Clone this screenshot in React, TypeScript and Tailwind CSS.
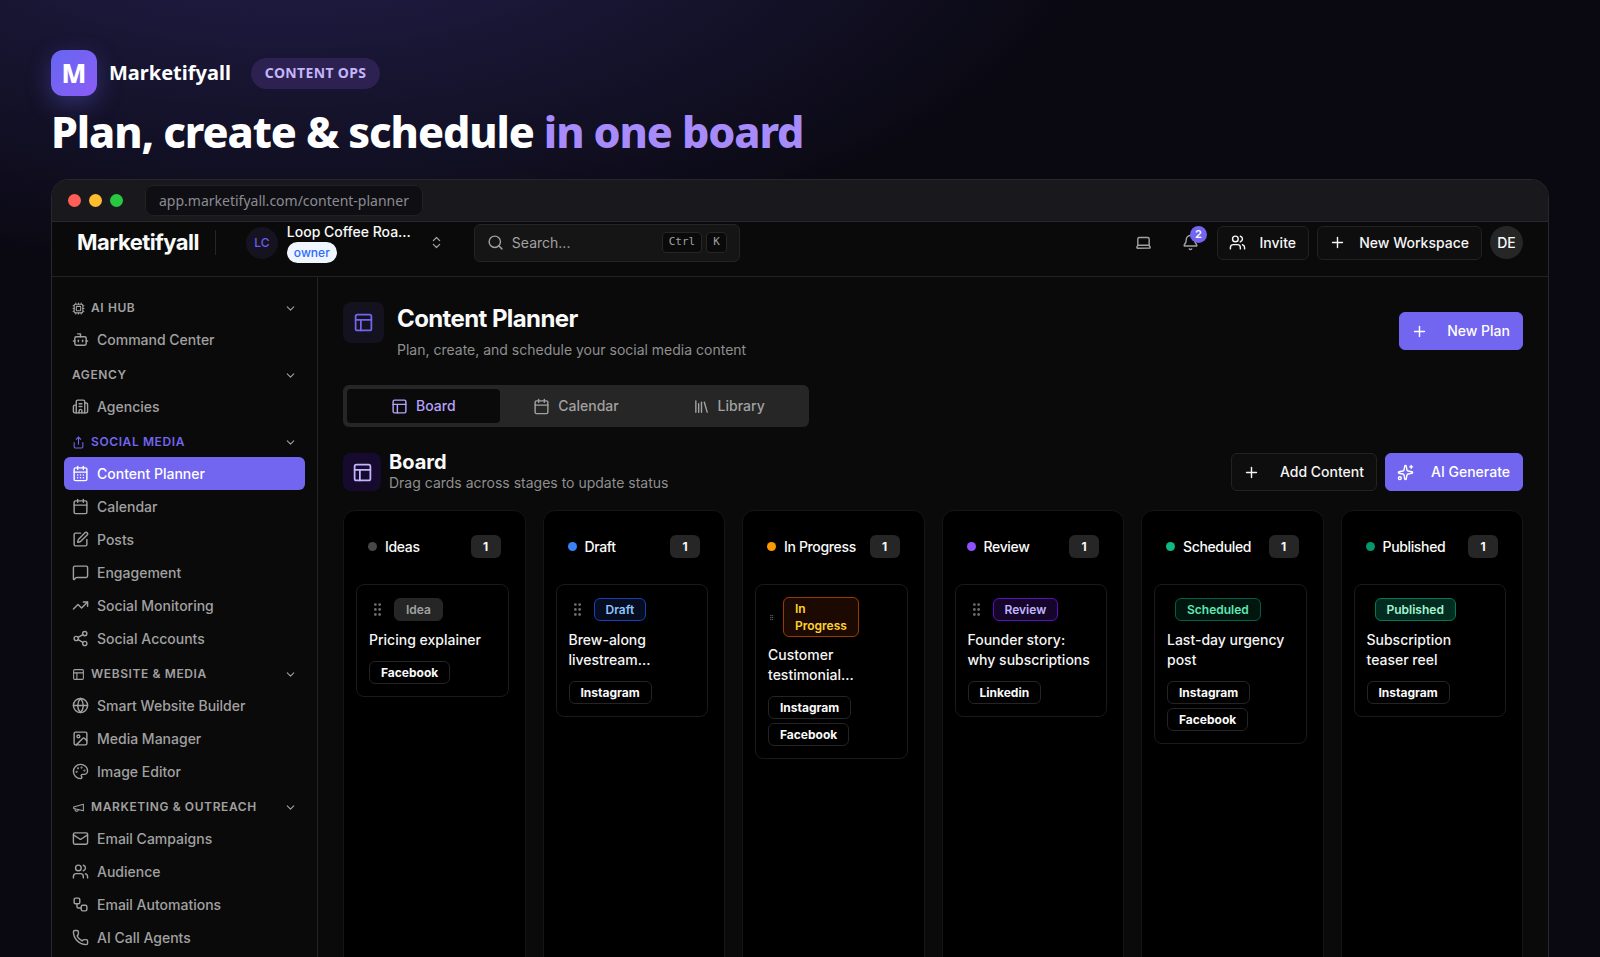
import type { ReactNode } from "react";
import {
  Bell,
  Bot,
  Building2,
  Calendar,
  CalendarDays,
  ChevronDown,
  ChevronsUpDown,
  Cpu,
  Globe,
  GripVertical,
  Image,
  Laptop,
  Library,
  type LucideIcon,
  Mail,
  MessageSquare,
  Palette,
  PanelsTopLeft,
  Phone,
  Plus,
  Search,
  Share,
  Share2,
  Sparkles,
  SquarePen,
  TrendingUp,
  Users,
  Workflow,
  createLucideIcon,
} from "lucide-react";
import clsx from "clsx";

const Megaphone = createLucideIcon("megaphone-classic", [
  ["path", { d: "m3 11 18-5v12L3 14v-3z", key: "horn" }],
  ["path", { d: "M11.6 16.8a3 3 0 1 1-5.8-1.6", key: "grip" }],
]);

interface NavItem {
  label: string;
  icon: LucideIcon;
  active?: boolean;
}

interface NavGroup {
  title: string;
  icon?: LucideIcon;
  active?: boolean;
  items: NavItem[];
}

const groups: NavGroup[] = [
  { title: "AI HUB", icon: Cpu, items: [{ label: "Command Center", icon: Bot }] },
  { title: "AGENCY", items: [{ label: "Agencies", icon: Building2 }] },
  {
    title: "SOCIAL MEDIA",
    icon: Share,
    active: true,
    items: [
      { label: "Content Planner", icon: CalendarDays, active: true },
      { label: "Calendar", icon: Calendar },
      { label: "Posts", icon: SquarePen },
      { label: "Engagement", icon: MessageSquare },
      { label: "Social Monitoring", icon: TrendingUp },
      { label: "Social Accounts", icon: Share2 },
    ],
  },
  {
    title: "WEBSITE & MEDIA",
    icon: PanelsTopLeft,
    items: [
      { label: "Smart Website Builder", icon: Globe },
      { label: "Media Manager", icon: Image },
      { label: "Image Editor", icon: Palette },
    ],
  },
  {
    title: "MARKETING & OUTREACH",
    icon: Megaphone,
    items: [
      { label: "Email Campaigns", icon: Mail },
      { label: "Audience", icon: Users },
      { label: "Email Automations", icon: Workflow },
      { label: "AI Call Agents", icon: Phone },
    ],
  },
];

interface Stage {
  name: string;
  dot: string;
  badge: string;
  badgeClass: string;
  grip: "full" | "tiny" | "none";
  title: string[];
  channels: string[];
}

const stages: Stage[] = [
  {
    name: "Ideas",
    dot: "bg-[#474747]",
    badge: "Idea",
    badgeClass: "border-[#262626] bg-[#262626] text-[#a1a1a1]",
    grip: "full",
    title: ["Pricing explainer"],
    channels: ["Facebook"],
  },
  {
    name: "Draft",
    dot: "bg-[#3b82f6]",
    badge: "Draft",
    badgeClass: "border-[#193cb8] bg-[#070d20] text-[#8ec5ff]",
    grip: "full",
    title: ["Brew-along", "livestream…"],
    channels: ["Instagram"],
  },
  {
    name: "In Progress",
    dot: "bg-[#fe9a00]",
    badge: "In Progress",
    badgeClass: "w-[76px] border-[#973c00] bg-[#1c0a02] text-[#ffd230]",
    grip: "tiny",
    title: ["Customer", "testimonial…"],
    channels: ["Instagram", "Facebook"],
  },
  {
    name: "Review",
    dot: "bg-[#8e51ff]",
    badge: "Review",
    badgeClass: "border-[#5d0ec0] bg-[#150629] text-[#c4b4ff]",
    grip: "full",
    title: ["Founder story:", "why subscriptions"],
    channels: ["Linkedin"],
  },
  {
    name: "Scheduled",
    dot: "bg-[#10b981]",
    badge: "Scheduled",
    badgeClass: "border-[#006045] bg-[#01160f] text-[#5ee9b5]",
    grip: "none",
    title: ["Last-day urgency", "post"],
    channels: ["Instagram", "Facebook"],
  },
  {
    name: "Published",
    dot: "bg-[#059669]",
    badge: "Published",
    badgeClass: "border-[#007a55] bg-[#032c21] text-[#a4f4cf]",
    grip: "none",
    title: ["Subscription", "teaser reel"],
    channels: ["Instagram"],
  },
];

interface ButtonProps {
  icon: LucideIcon;
  primary?: boolean;
  className?: string;
  children: ReactNode;
}

const Button = ({ icon: Icon, primary, className, children }: ButtonProps) => (
  <button
    type="button"
    className={clsx(
      "flex items-center justify-between rounded-md border pr-3 pl-[11px] text-sm font-medium",
      primary ? "border-[#7265f0] bg-[#7265f0] text-white" : "border-[#222] bg-[#0e0e0e] text-[#f5f5f5]",
      className
    )}
  >
    <Icon size={17} />
    {children}
  </button>
);

const Hero = () => (
  <div className="px-[51px] pt-[50px]">
    <div className="flex items-center">
      <div className="flex h-[46px] w-[46px] items-center justify-center rounded-xl bg-linear-to-br from-[#6366f1] to-[#8b5cf6] text-[26px] font-extrabold text-white shadow-[0_8px_24px_rgba(99,102,241,0.35)]">
        M
      </div>
      <span className="ml-3 text-xl font-bold text-white">Marketifyall</span>
      <span className="ml-5 flex h-[31px] items-center rounded-full bg-[#2c2150] px-[14px] text-sm font-bold tracking-wide text-[#c4b5fd]">
        CONTENT OPS
      </span>
    </div>
    <h1 className="mt-2 text-[43px] leading-[56px] font-extrabold tracking-tight text-white">
      Plan, create &amp; schedule <span className="text-[#a78bfa]">in one board</span>
    </h1>
  </div>
);

const TitleBar = () => (
  <div className="flex h-[42px] items-center border-b border-[#27272c] bg-[#18181d] pl-4">
    <div className="flex gap-2">
      <span className="h-[13px] w-[13px] rounded-full bg-[#ff5f57]" />
      <span className="h-[13px] w-[13px] rounded-full bg-[#febc2e]" />
      <span className="h-[13px] w-[13px] rounded-full bg-[#28c840]" />
    </div>
    <span className="ml-[22px] flex h-[31px] items-center rounded-lg border border-[#202026] bg-[#0f0f13] px-[13px] text-sm text-[#8b8b94]">
      app.marketifyall.com/content-planner
    </span>
  </div>
);

const Header = () => (
  <header className="flex h-[55px] items-center border-b border-[#222] px-[25px] pb-[13px]">
    <span className="text-[22px] font-bold tracking-tight text-[#fafafa]">Marketifyall</span>
    <span className="ml-4 h-[25px] w-px bg-[#262626]" />
    <button type="button" className="ml-[30px] flex items-center text-left">
      <span className="flex h-8 w-8 items-center justify-center rounded-full bg-[#15131f] text-xs font-medium text-[#6a5cf0]">LC</span>
      <span className="ml-[9px] flex w-[142px] flex-col items-start">
        <span className="text-sm leading-5 font-medium text-[#fafafa]">Loop Coffee Roa…</span>
        <span className="flex h-[21px] items-center rounded-full bg-[#eff6ff] px-[7px] text-xs font-medium text-[#2b6bff]">owner</span>
      </span>
      <ChevronsUpDown size={15} className="text-[#a1a1a1]" />
    </button>
    <label className="ml-[30px] flex h-[38px] w-[266px] items-center rounded-md border border-[#242424] bg-[#151515] px-3 text-[#a1a1a1]">
      <Search size={17} />
      <input
        aria-label="Search"
        placeholder="Search..."
        className="ml-2 min-w-0 flex-1 bg-transparent text-sm outline-none placeholder:text-[#a1a1a1]"
      />
      <kbd className="flex h-[21px] items-center rounded border border-[#262626] bg-[#0a0a0a] px-1.5 font-['DejaVu_Sans_Mono',monospace] text-[11px]">Ctrl</kbd>
      <kbd className="ml-1 flex h-[21px] items-center rounded border border-[#262626] bg-[#0a0a0a] px-1.5 font-['DejaVu_Sans_Mono',monospace] text-[11px]">K</kbd>
    </label>
    <div className="ml-auto flex items-center gap-2">
      <button type="button" aria-label="Theme" className="mr-[22px] text-[#a1a1a1]">
        <Laptop size={17} />
      </button>
      <button type="button" aria-label="Notifications" className="relative mr-[10px] text-[#a1a1a1]">
        <Bell size={17} />
        <span className="absolute -top-2 -right-2 flex h-[17px] w-[17px] items-center justify-center rounded-full bg-[#7265f0] text-[11px] font-semibold text-white">2</span>
      </button>
      <Button icon={Users} className="h-[34px] w-[92px]">Invite</Button>
      <Button icon={Plus} className="h-[34px] w-[165px]">New Workspace</Button>
      <span className="flex h-[33px] w-[33px] items-center justify-center rounded-full bg-[#262626] text-sm font-medium text-[#fafafa]">DE</span>
    </div>
  </header>
);

const Sidebar = () => (
  <nav className="w-[266px] shrink-0 border-r border-[#222] px-3 pt-3">
    {groups.map(({ title, icon: Icon, active, items }) => (
      <div key={title}>
        <button
          type="button"
          className={clsx(
            "flex h-[34px] w-full items-center gap-1.5 pt-1 pr-2 pl-2 text-xs font-semibold tracking-wider",
            active ? "text-[#7265f0]" : "text-[#a1a1a1]"
          )}
        >
          {Icon && <Icon size={13} />}
          {title}
          <ChevronDown size={13} className="ml-auto text-[#a1a1a1]" />
        </button>
        {items.map(({ label, icon: ItemIcon, active: current }) => (
          <a
            key={label}
            href="#"
            className={clsx(
              "flex h-[33px] items-center gap-2 rounded-md pl-2 text-sm font-medium",
              current ? "bg-[#7265f0] text-white" : "text-[#a1a1a1]"
            )}
          >
            <ItemIcon size={17} />
            {label}
          </a>
        ))}
      </div>
    ))}
  </nav>
);

const StageColumn = ({ stage }: { stage: Stage }) => (
  <section className="min-w-0 rounded-xl border border-[#151515] bg-black pr-4 pl-3">
    <div className="flex items-center pt-6 pr-2 pl-3">
      <span className={clsx("h-[9px] w-[9px] rounded-full", stage.dot)} />
      <h3 className="ml-2 text-sm font-medium tracking-tight whitespace-nowrap text-[#fafafa]">{stage.name}</h3>
      <span className="ml-auto flex h-[23px] w-[30px] items-center justify-center rounded-md bg-[#262626] text-xs font-bold text-[#fafafa]">1</span>
    </div>
    <article className="mt-[26px] rounded-lg border border-[#1a1a1a] p-3">
      <div className="flex min-h-[25px] items-center gap-2">
        {stage.grip === "full" && <GripVertical size={17} className="text-[#6b6b6b]" />}
        {stage.grip === "tiny" && <GripVertical size={7} className="text-[#6b6b6b]" />}
        {stage.grip === "none" && <span />}
        <span className={clsx("rounded-md border px-[11px] py-[2px] text-xs leading-[17px] font-semibold", stage.badgeClass)}>{stage.badge}</span>
      </div>
      <h4 className="mt-2 text-sm leading-5 font-medium text-[#f5f5f5]">
        {stage.title.map((line) => (
          <span key={line} className="block whitespace-nowrap">{line}</span>
        ))}
      </h4>
      <div className="mt-[11px] flex flex-wrap gap-1">
        {stage.channels.map((channel) => (
          <span key={channel} className="rounded-md border border-[#242424] px-[11px] py-[2px] text-xs leading-[17px] font-bold text-[#fafafa]">
            {channel}
          </span>
        ))}
      </div>
    </article>
  </section>
);

const Planner = () => (
  <main className="flex min-w-0 flex-1 flex-col px-[25px] pt-[25px]">
    <div className="flex items-start">
      <span className="flex h-[41px] w-[41px] items-center justify-center rounded-lg bg-[#14121f] text-[#7265f0]">
        <PanelsTopLeft size={21} />
      </span>
      <div className="ml-[13px]">
        <h2 className="text-2xl leading-[34px] font-bold tracking-tight text-[#fafafa]">Content Planner</h2>
        <p className="mt-1 text-sm leading-5 text-[#8f8f8f]">Plan, create, and schedule your social media content</p>
      </div>
      <Button icon={Plus} primary className="mt-[10px] ml-auto h-[38px] w-[124px]">New Plan</Button>
    </div>

    <div role="tablist" className="mt-[25px] grid h-[42px] w-[466px] grid-cols-3 rounded-md bg-[#262626] p-1 text-sm font-medium text-[#a1a1a1]">
      <button type="button" role="tab" aria-selected="true" className="flex items-center justify-center gap-2 rounded bg-[#0a0a0a] text-[#b5a2fb]">
        <PanelsTopLeft size={17} />
        Board
      </button>
      <button type="button" role="tab" aria-selected="false" className="flex items-center justify-center gap-2">
        <Calendar size={17} />
        Calendar
      </button>
      <button type="button" role="tab" aria-selected="false" className="flex items-center justify-center gap-2">
        <Library size={17} />
        Library
      </button>
    </div>

    <div className="mt-6 flex items-center">
      <span className="flex h-[38px] w-[38px] items-center justify-center rounded-lg bg-[#160b2e] text-[#c4b4ff]">
        <PanelsTopLeft size={21} />
      </span>
      <div className="ml-2">
        <h2 className="text-xl leading-[22px] font-bold text-[#fafafa]">Board</h2>
        <p className="text-sm leading-5 text-[#8f8f8f]">Drag cards across stages to update status</p>
      </div>
      <div className="ml-auto flex gap-2">
        <Button icon={Plus} className="h-[38px] w-[146px]">Add Content</Button>
        <Button icon={Sparkles} primary className="h-[38px] w-[138px]">AI Generate</Button>
      </div>
    </div>

    {/* columns run past the bottom of the window */}
    <div className="mt-[17px] -mb-5 grid flex-1 grid-cols-6 gap-[17px]">
      {stages.map((stage) => (
        <StageColumn key={stage.name} stage={stage} />
      ))}
    </div>
  </main>
);

export default function App() {
  return (
    <div className="flex h-screen flex-col overflow-hidden bg-[#0a0912] bg-[radial-gradient(1100px_520px_at_18%_-12%,#252050_0%,transparent_75%)] font-['Noto_Sans',sans-serif]">
      <Hero />
      <div className="mx-[51px] mt-[19px] flex min-h-0 flex-1 flex-col overflow-hidden rounded-t-[18px] border border-b-0 border-[#27272c] bg-[#0a0a0a]">
        <TitleBar />
        <div className="flex min-h-0 flex-1 flex-col font-[Inter,sans-serif]">
          <Header />
          <div className="flex min-h-0 flex-1">
            <Sidebar />
            <Planner />
          </div>
        </div>
      </div>
    </div>
  );
}
